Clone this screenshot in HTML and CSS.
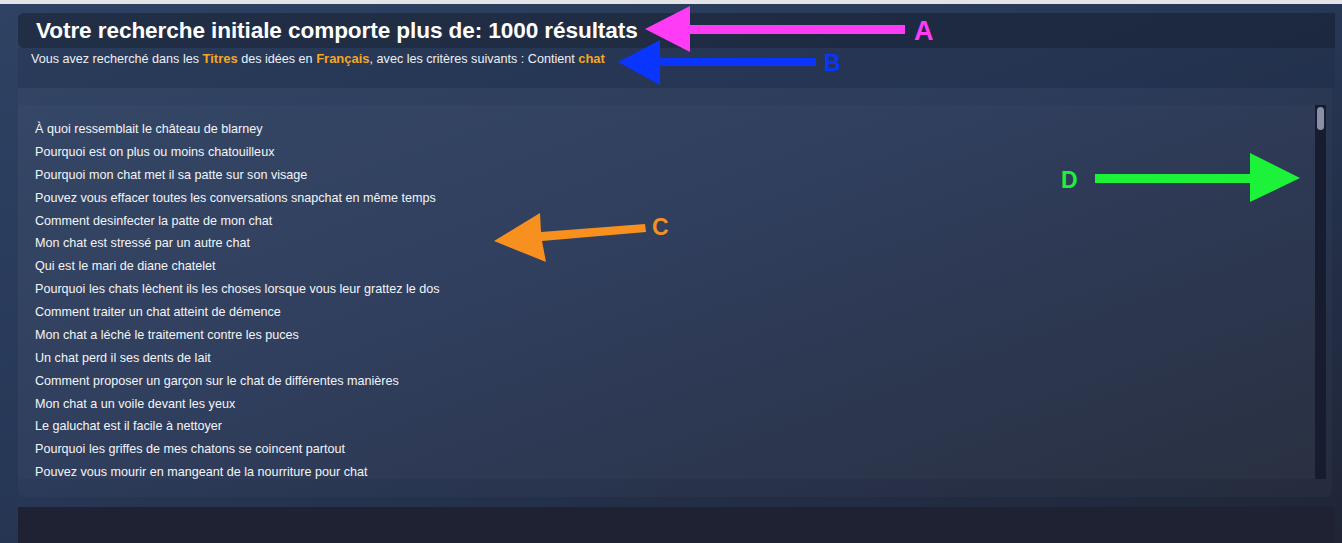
FILE: index.html
```html
<!DOCTYPE html>
<html lang="fr">
  <head>
    <meta charset="UTF-8" />
    <meta name="viewport" content="width=device-width, initial-scale=1.0" />
    <title>Recherche</title>
    <link rel="stylesheet" href="styles.css">
  </head>
  <body>
    <div class="topbar"></div>
    <div class="page">
      <div class="header">
        <h1 class="title">Votre recherche initiale comporte plus de: 1000 résultats</h1>
      </div>
      <p class="subtitle">
        Vous avez recherché dans les <span class="hl">Titres</span> des idées en <span class="hl">Français</span>, avec les critères suivants : Contient <span class="hl">chat</span>
      </p>
      <div class="panel">
        <div class="results">
          <ul class="list">
            <li>À quoi ressemblait le château de blarney</li>
            <li>Pourquoi est on plus ou moins chatouilleux</li>
            <li>Pourquoi mon chat met il sa patte sur son visage</li>
            <li>Pouvez vous effacer toutes les conversations snapchat en même temps</li>
            <li>Comment desinfecter la patte de mon chat</li>
            <li>Mon chat est stressé par un autre chat</li>
            <li>Qui est le mari de diane chatelet</li>
            <li>Pourquoi les chats lèchent ils les choses lorsque vous leur grattez le dos</li>
            <li>Comment traiter un chat atteint de démence</li>
            <li>Mon chat a léché le traitement contre les puces</li>
            <li>Un chat perd il ses dents de lait</li>
            <li>Comment proposer un garçon sur le chat de différentes manières</li>
            <li>Mon chat a un voile devant les yeux</li>
            <li>Le galuchat est il facile à nettoyer</li>
            <li>Pourquoi les griffes de mes chatons se coincent partout</li>
            <li>Pouvez vous mourir en mangeant de la nourriture pour chat</li>
          </ul>
          <div class="track"><div class="thumb"></div></div>
        </div>
      </div>
      <div class="footer"></div>
    </div>

    <svg class="marks" width="1342" height="543" viewBox="0 0 1342 543">
      <!-- A -->
      <polygon fill="#ff3cf5" points="645,29 690,6 690,25 905,25 905,34 690,34 690,52" />
      <text x="914" y="40" class="mark" fill="#ff3cf5" font-size="27">A</text>
      <!-- B -->
      <polygon fill="#0a35ff" points="618,62 660,40 660,58 816,58 816,66 660,66 660,85" />
      <text x="824" y="71" class="mark" fill="#0a35ff" font-size="23">B</text>
      <!-- C -->
      <polygon fill="#f7901f" points="494,241 540,213 541,232 645,224 646,232 542,241 546,262" />
      <text x="652" y="235" class="mark" fill="#f7901f" font-size="23">C</text>
      <!-- D -->
      <polygon fill="#1cf23a" points="1300,178 1250,153 1250,174 1095,174 1095,183 1250,183 1250,202" />
      <text x="1061" y="188" class="mark" fill="#1cf23a" font-size="23">D</text>
    </svg>
  </body>
</html>
```

FILE: styles.css
```css
* {
  margin: 0;
  padding: 0;
  box-sizing: border-box;
}
body {
  width: 1342px;
  height: 543px;
  overflow: hidden;
  position: relative;
  font-family: "Liberation Sans", Arial, sans-serif;
  color: #f2f4f8;
  background: linear-gradient(160deg, #2f4263 0%, #273857 45%, #1f2536 100%);
}
.topbar {
  height: 4px;
  background-color: #e4e4e6;
}
.page {
  padding: 9px 7px 0 18px;
}
.header {
  height: 35px;
  background-color: rgba(18, 24, 36, 0.45);
  border-radius: 6px 0 0 6px;
  padding-left: 18px;
  display: flex;
  align-items: center;
}
.title {
  font-size: 22.6px;
  font-weight: bold;
  letter-spacing: -0.1px;
  color: #ffffff;
}
.subtitle {
  height: 40px;
  padding: 3px 0 0 13px;
  font-size: 12.6px;
  line-height: 16px;
  color: #eef0f4;
  background-color: rgba(20, 28, 44, 0.12);
}
.hl {
  color: #f5a623;
  font-weight: bold;
  font-size: 13px;
}
.panel {
  height: 409px;
  padding-top: 17px;
  margin-right: 3px;
  background-color: rgba(255, 255, 255, 0.025);
  border-radius: 0 0 6px 6px;
}
.results {
  display: flex;
  height: 374px;
  margin-right: 6px;
}
.list {
  flex: 1;
  list-style: none;
  padding: 13px 0 0 17px;
  font-size: 12.6px;
  line-height: 22.87px;
  color: #f4f5f8;
  background-color: rgba(255, 255, 255, 0.02);
}
.track {
  width: 11px;
  background-color: #171c30;
  padding: 2px 2px 0;
}
.thumb {
  height: 23px;
  border-radius: 4px;
  background-color: #8a8fa6;
}
.footer {
  height: 40px;
  margin-top: 10px;
  background-color: #1f2233;
}
.marks {
  position: absolute;
  left: 0;
  top: 0;
  pointer-events: none;
}
.mark {
  font-family: "Liberation Sans", Arial, sans-serif;
  font-weight: bold;
}
```
